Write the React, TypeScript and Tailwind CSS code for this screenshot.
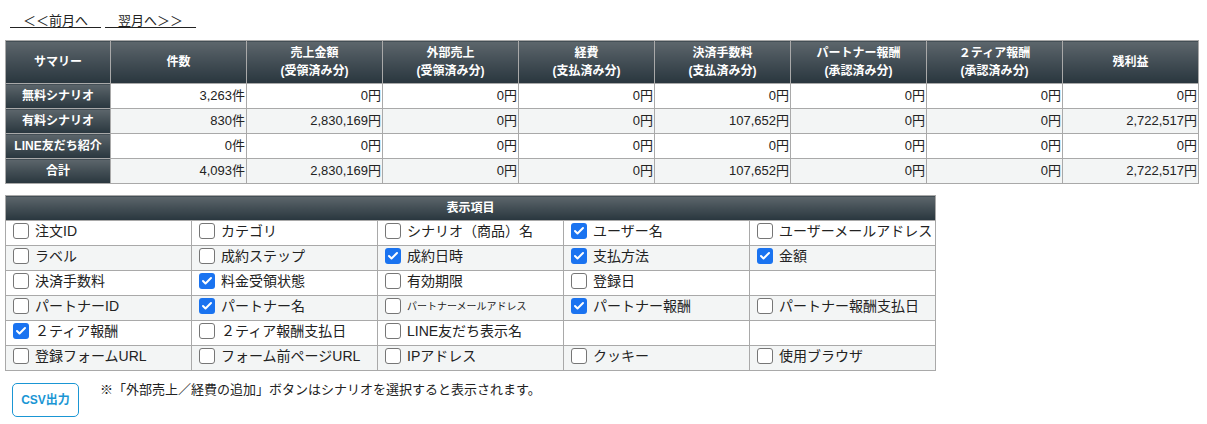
import { Check } from 'lucide-react';

const headers = [
  ['サマリー'],
  ['件数'],
  ['売上金額', '(受領済み分)'],
  ['外部売上', '(受領済み分)'],
  ['経費', '(支払済み分)'],
  ['決済手数料', '(支払済み分)'],
  ['パートナー報酬', '(承認済み分)'],
  ['２ティア報酬', '(承認済み分)'],
  ['残利益'],
];

const rows = [
  ['無料シナリオ', '3,263件', '0円', '0円', '0円', '0円', '0円', '0円', '0円'],
  ['有料シナリオ', '830件', '2,830,169円', '0円', '0円', '107,652円', '0円', '0円', '2,722,517円'],
  ['LINE友だち紹介', '0件', '0円', '0円', '0円', '0円', '0円', '0円', '0円'],
  ['合計', '4,093件', '2,830,169円', '0円', '0円', '107,652円', '0円', '0円', '2,722,517円'],
];

type Item = { label: string; checked?: boolean; small?: boolean } | null;

const items: Item[][] = [
  [{ label: '注文ID' }, { label: 'カテゴリ' }, { label: 'シナリオ（商品）名' }, { label: 'ユーザー名', checked: true }, { label: 'ユーザーメールアドレス' }],
  [{ label: 'ラベル' }, { label: '成約ステップ' }, { label: '成約日時', checked: true }, { label: '支払方法', checked: true }, { label: '金額', checked: true }],
  [{ label: '決済手数料' }, { label: '料金受領状態', checked: true }, { label: '有効期限' }, { label: '登録日' }, null],
  [{ label: 'パートナーID' }, { label: 'パートナー名', checked: true }, { label: 'パートナーメールアドレス', small: true }, { label: 'パートナー報酬', checked: true }, { label: 'パートナー報酬支払日' }],
  [{ label: '２ティア報酬', checked: true }, { label: '２ティア報酬支払日' }, { label: 'LINE友だち表示名' }, null, null],
  [{ label: '登録フォームURL' }, { label: 'フォーム前ページURL' }, { label: 'IPアドレス' }, { label: 'クッキー' }, { label: '使用ブラウザ' }],
];

const dark = 'bg-gradient-to-b from-[#5d666c] to-[#29363e] text-white font-bold';

function Box({ checked }: { checked?: boolean }) {
  return checked ? (
    <span className="w-4 h-4 rounded-[3px] bg-[#1a73f0] flex items-center justify-center shrink-0">
      <Check className="w-3 h-3 text-white" strokeWidth={4} />
    </span>
  ) : (
    <span className="w-4 h-4 rounded-[3px] border border-[#767676] bg-white shrink-0" />
  );
}

export default function App() {
  return (
    <div className="bg-white text-[#222] pl-[5px] pt-[12px] font-['Liberation_Sans','Noto_Sans_CJK_JP',sans-serif]">
      <div className="flex gap-[4px] pl-[5px] text-[13px] leading-[18px] h-[28px]">
        <a className="underline underline-offset-2 whitespace-pre">{'　＜＜前月へ　'}</a>
        <a className="underline underline-offset-2 whitespace-pre">{'　翌月へ＞＞　'}</a>
      </div>

      <table className="border-collapse table-fixed w-[1193px] text-[13px]">
        <colgroup>
          <col className="w-[105px]" />
          {headers.slice(1).map((_, i) => (
            <col key={i} className="w-[136px]" />
          ))}
        </colgroup>
        <thead>
          <tr className="h-[43px]">
            {headers.map((h, i) => (
              <th key={i} className={`${dark} border border-[#a9a9a9] text-[12px] leading-[18px] text-center font-bold`}>
                {h.map((l, j) => (
                  <div key={j}>{l}</div>
                ))}
              </th>
            ))}
          </tr>
        </thead>
        <tbody>
          {rows.map((r, i) => (
            <tr key={i} className={`h-[25px] ${i % 2 === 1 ? 'bg-[#f3f5f5]' : 'bg-white'}`}>
              {r.map((c, j) =>
                j === 0 ? (
                  <th key={j} className={`${dark} border border-[#a9a9a9] text-[12px] text-center whitespace-nowrap`}>
                    {c}
                  </th>
                ) : (
                  <td key={j} className="border border-[#a9a9a9] text-right pr-[1px] leading-[24px]">
                    {c}
                  </td>
                )
              )}
            </tr>
          ))}
        </tbody>
      </table>

      <table className="border-collapse table-fixed w-[930px] mt-[11px] text-[14px]">
        <colgroup>
          {[0, 1, 2, 3, 4].map((i) => (
            <col key={i} className="w-[186px]" />
          ))}
        </colgroup>
        <thead>
          <tr className="h-[25px]">
            <th colSpan={5} className={`${dark} border border-[#a9a9a9] text-[12px] text-center`}>
              表示項目
            </th>
          </tr>
        </thead>
        <tbody>
          {items.map((r, i) => (
            <tr key={i} className={`h-[25px] ${i % 2 === 1 ? 'bg-[#f3f5f5]' : 'bg-white'}`}>
              {r.map((it, j) => (
                <td key={j} className="border border-[#a9a9a9] pl-[7px] p-0 align-top">
                  {it && (
                    <label className="flex items-center gap-[6px] whitespace-nowrap h-[20px]">
                      <Box checked={it.checked} />
                      <span className={it.small ? 'text-[10px]' : ''}>{it.label}</span>
                    </label>
                  )}
                </td>
              ))}
            </tr>
          ))}
        </tbody>
      </table>

      <div className="flex items-start mt-[12px] pl-[7px] gap-[21px]">
        <button className="w-[67px] h-[34px] border border-[#1a96d4] rounded-[5px] text-[#1a96d4] text-[12px] font-bold">
          CSV出力
        </button>
        <p className="text-[13px] leading-[16px] mt-[-1px]">
          ※「外部売上／経費の追加」ボタンはシナリオを選択すると表示されます。
        </p>
      </div>
    </div>
  );
}
